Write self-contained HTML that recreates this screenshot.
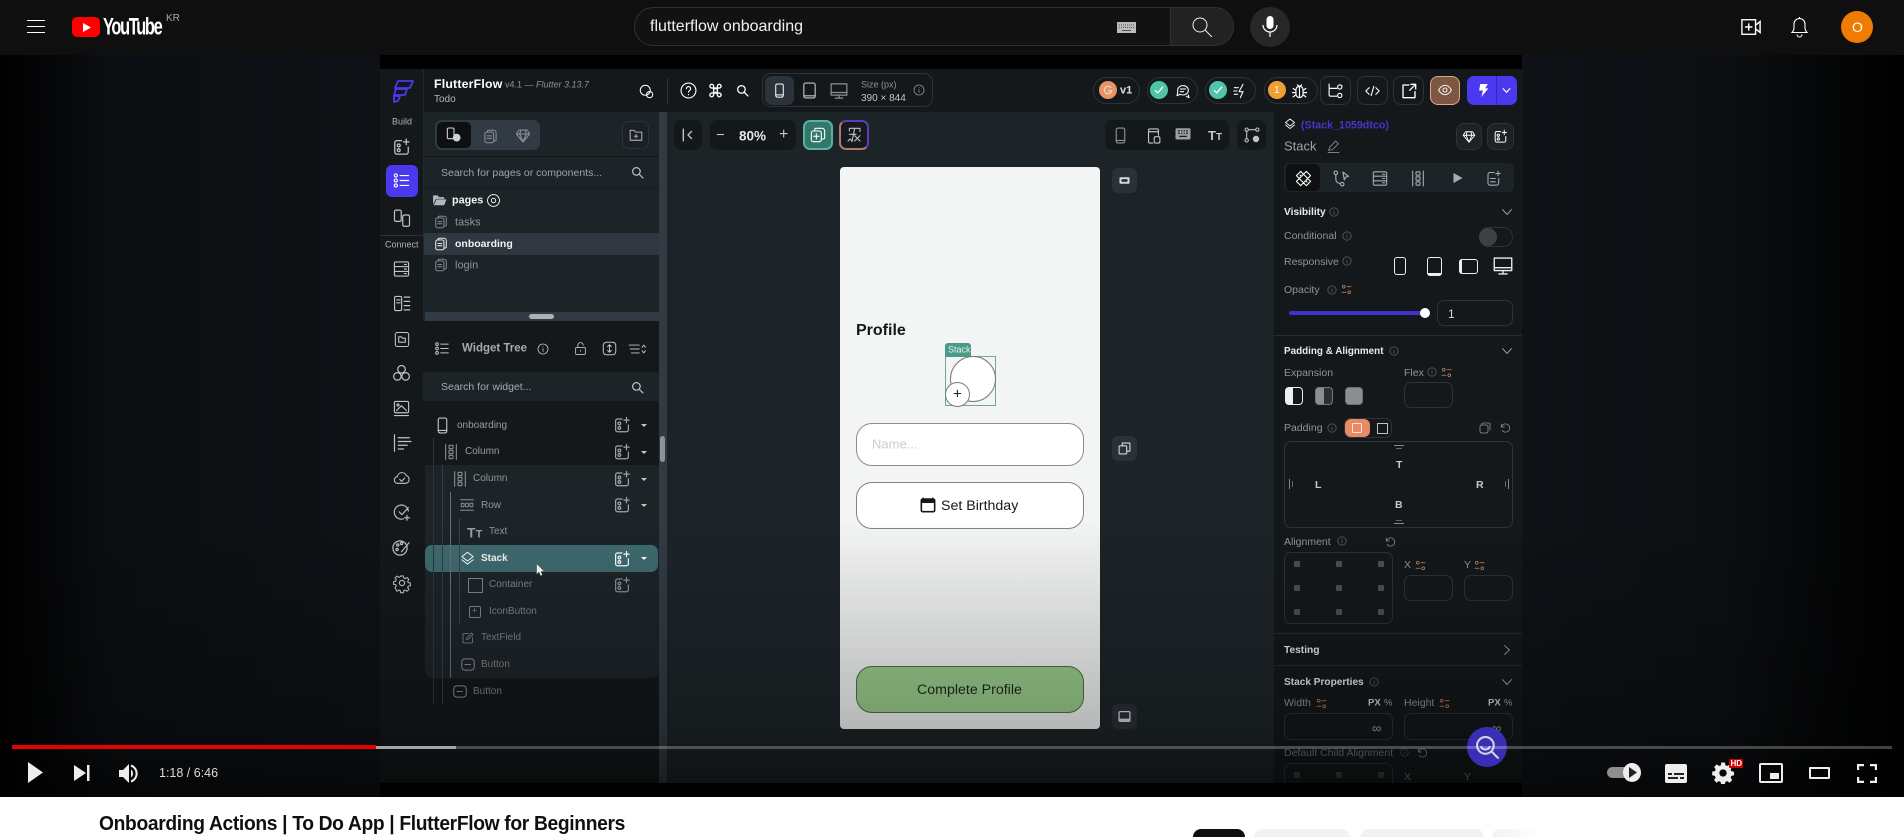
<!DOCTYPE html>
<html><head><meta charset="utf-8"><title>Onboarding Actions | To Do App | FlutterFlow for Beginners</title>
<style>
html,body{margin:0;padding:0;background:#fff}
#p{position:relative;width:1904px;height:837px;overflow:hidden;font-family:"Liberation Sans",sans-serif;background:#fff}
.a{position:absolute}
.t{position:absolute;white-space:nowrap;line-height:1;transform:translateY(calc(-50% + 2px));color:#9ea3a8;font-size:11px}
.b{font-weight:bold;color:#e8eaeb}
.i{position:absolute;fill:none;stroke:#bfc3c7;stroke-width:1.6;stroke-linecap:round;stroke-linejoin:round;overflow:visible}
.w{stroke:#fff}.g{stroke:#8c9196}.o{stroke:#c98a5e}.f{fill:#fff;stroke:none}
.box{position:absolute;box-sizing:border-box;border:1px solid #2c3238;border-radius:7px}
.l{position:absolute;width:1px;background:#3a4147}
.hr{position:absolute;left:1274px;width:248px;height:1px;background:#272c31}
.btn{position:absolute;box-sizing:border-box;border:1px solid #2c3238;border-radius:8px;background:#14181b}
.dot{position:absolute;width:6px;height:6px;background:#4a4f54;border-radius:1px}
</style></head><body><div id="p">
<svg width="0" height="0" style="position:absolute"><defs>
<symbol id="add" viewBox="0 0 24 24"><path d="M12 4H6a2.500 2.500 0 0 0-2.500 2.500v12A2.500 2.500 0 0 0 6 21h12a2.500 2.500 0 0 0 2.500-2.500V12M18 2v7M14.500 5.500h7"/><circle cx="8.500" cy="10" r="1.800"/><circle cx="8.500" cy="16" r="1.800"/></symbol>
<symbol id="page" viewBox="0 0 24 24"><rect x="3" y="5" width="14" height="17" rx="3"/><path d="M7 5V4a2 2 0 0 1 2-2h8a4 4 0 0 1 4 4v11a2 2 0 0 1-2 2h-2M6.500 11h7M6.500 15h7"/></symbol>
<symbol id="info" viewBox="0 0 24 24"><circle cx="12" cy="12" r="10"/><path d="M12 11v6M12 7v.5"/></symbol>
<symbol id="var" viewBox="0 0 24 24"><circle cx="6" cy="6" r="3"/><path d="M13 6h9M2 18h9"/><circle cx="18" cy="18" r="3"/></symbol>
<symbol id="mag" viewBox="0 0 24 24"><circle cx="10" cy="10" r="7"/><path d="M15 15l7 7"/></symbol>
<symbol id="phone" viewBox="0 0 24 24"><rect x="6" y="1.500" width="12" height="21" rx="2.500"/><path d="M6 19h12"/></symbol>
<symbol id="tab" viewBox="0 0 24 24"><rect x="4" y="1.500" width="16" height="21" rx="2.500"/><path d="M4 19.500h16"/></symbol>
<symbol id="desk" viewBox="0 0 24 24"><rect x="1.500" y="2.500" width="21" height="15"/><path d="M1.500 14h21M12 17.500v3.500M7 21.500h10"/></symbol>
<symbol id="col" viewBox="0 0 24 24"><path d="M4 1v22M20 1v22"/><rect x="9" y="2" width="6" height="5" rx="1"/><rect x="9" y="9.500" width="6" height="5" rx="1"/><rect x="9" y="17" width="6" height="5" rx="1"/></symbol>
<symbol id="stack" viewBox="0 0 24 24"><path d="M12 2l9 7-9 7-9-7zM3 14l9 7 9-7"/></symbol>
<symbol id="chev" viewBox="0 0 24 24"><path d="M3 7l9 10 9-10"/></symbol>
<symbol id="undo" viewBox="0 0 24 24"><path d="M5 4v7h7M5.500 11A9 9 0 1 1 7 18.500"/></symbol>
<symbol id="list" viewBox="0 0 24 24"><circle cx="4" cy="5" r="2.200"/><circle cx="4" cy="12" r="2.200"/><circle cx="4" cy="19" r="2.200"/><path d="M10 5h12M10 12h12M10 19h12"/></symbol>
<symbol id="btnw" viewBox="0 0 24 24"><rect x="2" y="3" width="20" height="18" rx="5"/><path d="M7 12h10" stroke-dasharray="2 1.400"/></symbol>
</defs></svg>

<!-- video background -->
<div class="a" style="left:0;top:55px;width:1904px;height:742px;background:linear-gradient(90deg,#000 0,#0b0e11 110px,#0e1216 380px,#0e1216 1522px,#0c0f12 1720px,#000 1904px)"></div>
<div class="a" style="left:380px;top:55px;width:1142px;height:728px;background:#000"></div>

<!-- APP -->
<div class="a" style="left:380px;top:69px;width:1142px;height:714px;background:#1d2428"></div>
<div class="a" style="left:380px;top:69px;width:1142px;height:43px;background:#14181b"></div>
<div class="a" style="left:380px;top:69px;width:43px;height:714px;background:#14181b"></div>
<div class="a" style="left:423px;top:69px;width:1px;height:714px;background:#22282d"></div>
<div class="a" style="left:1274px;top:112px;width:248px;height:671px;background:#14181b"></div>
<div class="a" style="left:659px;top:112px;width:8px;height:671px;background:#323b44"></div>

<!-- header -->
<svg class="i" style="left:392px;top:79px;width:22px;height:24px;stroke:#4b39ef;stroke-width:1.8" viewBox="0 0 22 24"><path d="M6 2h15l-3 7H3zM4 10h11l-2 6H2zM2 17h6l-2 5-4 1z"/></svg>
<div class="t b" style="left:434px;top:82px;font-size:12.300px;color:#fff;letter-spacing:.2px">FlutterFlow</div>
<div class="t" style="left:505px;top:83px;font-size:9px;color:#8e9398">v4.1 — <i>Flutter 3.13.7</i></div>
<div class="t" style="left:434px;top:98px;font-size:10px;color:#b3b7bb">Todo</div>
<svg class="i w" style="left:639px;top:84px;width:15px;height:15px" viewBox="0 0 24 24"><circle cx="10" cy="10" r="8"/><circle cx="17" cy="17" r="5"/></svg>
<div class="a" style="left:667px;top:78px;width:1px;height:26px;background:#2c3238"></div>
<svg class="i w" style="left:680px;top:82px;width:17px;height:17px" viewBox="0 0 24 24"><circle cx="12" cy="12" r="10.500"/><path d="M9 9.500a3 3 0 1 1 4.500 2.600c-1 .6-1.500 1.200-1.500 2.400M12 17.500v.5"/></svg>
<svg class="i w" style="left:708px;top:83px;width:15px;height:15px;stroke-width:2.200" viewBox="0 0 24 24"><path d="M9 9h6v6H9zM9 9V5a3 3 0 1 0-3 3h12a3 3 0 1 0-3-3v14a3 3 0 1 0 3-3H6a3 3 0 1 0 3 3V9"/></svg>
<svg class="i w" style="left:736px;top:84px;width:13px;height:13px;stroke-width:2.400" viewBox="0 0 24 24"><use href="#mag"/></svg>
<div class="box" style="left:762px;top:73px;width:171px;height:34px;border-radius:9px"></div>
<div class="a" style="left:765px;top:76px;width:29px;height:29px;background:#2c333a;border-radius:7px"></div>
<svg class="i w" style="left:772px;top:82px;width:15px;height:17px" viewBox="0 0 24 24"><use href="#phone"/></svg>
<svg class="i" style="left:801px;top:82px;width:17px;height:17px" viewBox="0 0 24 24"><use href="#tab"/></svg>
<svg class="i g" style="left:830px;top:82px;width:18px;height:18px" viewBox="0 0 24 24"><use href="#desk"/></svg>
<div class="t" style="left:861px;top:83px;font-size:9px;color:#8e9398">Size (px)</div>
<div class="t" style="left:861px;top:97px;font-size:10px;color:#c4c7ca">390 × 844</div>
<svg class="i g" style="left:913px;top:84px;width:12px;height:12px" viewBox="0 0 24 24"><use href="#info"/></svg>

<div class="box" style="left:1093px;top:77px;width:47px;height:27px;border-radius:14px"></div>
<div class="a" style="left:1099px;top:81px;width:18px;height:18px;border-radius:50%;background:#e59466"></div>
<svg class="i" style="left:1103px;top:85px;width:10px;height:10px;stroke:#f5d5bf;stroke-width:3" viewBox="0 0 24 24"><path d="M19 6a9 9 0 1 0 2 8h-8"/></svg>
<div class="t" style="left:1120px;top:89px;font-size:11px;font-weight:bold;color:#dfe1e3">v1</div>
<div class="box" style="left:1147px;top:77px;width:51px;height:27px;border-radius:14px"></div>
<div class="a" style="left:1150px;top:81px;width:18px;height:18px;border-radius:50%;background:#4fc4a8"></div>
<svg class="i w" style="left:1154px;top:85px;width:10px;height:10px;stroke-width:3" viewBox="0 0 24 24"><path d="M3 13l6 6L21 5"/></svg>
<svg class="i w" style="left:1175px;top:83px;width:16px;height:16px" viewBox="0 0 24 24"><path d="M4 11a8 7 0 1 1 4 6l-5 2 1-4zM17 20l4 2-1-4M8 9h8M8 13h5"/></svg>
<div class="box" style="left:1205px;top:77px;width:51px;height:27px;border-radius:14px"></div>
<div class="a" style="left:1209px;top:81px;width:18px;height:18px;border-radius:50%;background:#4fc4a8"></div>
<svg class="i w" style="left:1213px;top:85px;width:10px;height:10px;stroke-width:3" viewBox="0 0 24 24"><path d="M3 13l6 6L21 5"/></svg>
<svg class="i w" style="left:1233px;top:83px;width:16px;height:16px" viewBox="0 0 24 24"><path d="M15 2L9 13h6l-4 9M2 7h6M1 12h5M2 17h5"/></svg>
<div class="box" style="left:1264px;top:77px;width:54px;height:27px;border-radius:14px"></div>
<div class="a" style="left:1268px;top:81px;width:18px;height:18px;border-radius:50%;background:#f0a033"></div>
<div class="t" style="left:1274px;top:89px;font-size:10px;color:#fff">1</div>
<svg class="i w" style="left:1291px;top:82px;width:17px;height:17px" viewBox="0 0 24 24"><rect x="7" y="6" width="10" height="16" rx="5"/><path d="M12 6v16M3 9l4 3M21 9l-4 3M2 15h5M22 15h-5M3 21l4-3M21 21l-4-3M9 4l2 2M15 4l-2 2"/></svg>
<div class="btn" style="left:1320px;top:76px;width:31px;height:29px"></div>
<svg class="i w" style="left:1327px;top:82px;width:17px;height:17px" viewBox="0 0 24 24"><path d="M3 3v15a2 2 0 0 0 2 2h9M3 9h11M21 5h-1"/><circle cx="18" cy="7" r="3"/><circle cx="18" cy="19" r="3"/></svg>
<div class="btn" style="left:1357px;top:76px;width:31px;height:29px"></div>
<svg class="i w" style="left:1364px;top:83px;width:17px;height:16px" viewBox="0 0 24 24"><path d="M7 7l-5 5 5 5M17 7l5 5-5 5M14 5l-4 14"/></svg>
<div class="btn" style="left:1393px;top:76px;width:31px;height:29px"></div>
<svg class="i w" style="left:1401px;top:83px;width:16px;height:16px;stroke-width:2" viewBox="0 0 24 24"><path d="M12 3H3v19h18v-9M13 11l9-9M15 2h7v7"/></svg>
<div class="a" style="left:1430px;top:76px;width:30px;height:29px;background:#7e5743;border:1px solid #d9a88c;border-radius:8px;box-sizing:border-box"></div>
<svg class="i w" style="left:1437px;top:83px;width:16px;height:14px" viewBox="0 0 24 24"><path d="M1 12s4-8 11-8 11 8 11 8-4 8-11 8-11-8-11-8z"/><circle cx="12" cy="12" r="3.500"/></svg>
<div class="a" style="left:1467px;top:76px;width:50px;height:29px;background:#4b39ef;border-radius:7px"></div>
<div class="a" style="left:1496px;top:76px;width:1px;height:29px;background:#3326b8"></div>
<svg class="i f" style="left:1477px;top:83px;width:13px;height:15px" viewBox="0 0 24 24"><path d="M6 0h14l-5 8h6L8 24l3-12H4z"/></svg>
<svg class="i w" style="left:1502px;top:86px;width:9px;height:9px;stroke-width:3" viewBox="0 0 24 24"><use href="#chev"/></svg>

<!-- rail -->
<div class="t" style="left:392px;top:120px;font-size:9px;color:#b0b4b8;width:20px">Build</div>
<svg class="i" style="left:392px;top:137px;width:19px;height:20px" viewBox="0 0 24 24"><use href="#add"/></svg>
<div class="a" style="left:386px;top:165px;width:32px;height:32px;background:#4b39ef;border-radius:6px"></div>
<svg class="i w" style="left:393px;top:172px;width:17px;height:17px" viewBox="0 0 24 24"><use href="#list"/></svg>
<svg class="i" style="left:393px;top:209px;width:18px;height:18px" viewBox="0 0 24 24"><rect x="2" y="1.500" width="9" height="15" rx="2"/><rect x="13" y="8" width="9" height="15" rx="2"/></svg>
<div class="a" style="left:381px;top:235px;width:42px;height:1px;background:#2c3238"></div>
<div class="t" style="left:385px;top:243px;font-size:9px;color:#b0b4b8">Connect</div>
<svg class="i" style="left:393px;top:260px;width:17px;height:18px" viewBox="0 0 24 24"><rect x="2" y="2" width="20" height="20" rx="2"/><path d="M2 8.500h20M2 15.500h20M16 5.500h3M16 12h3M16 18.500h3"/></svg>
<svg class="i" style="left:393px;top:295px;width:18px;height:17px" viewBox="0 0 24 24"><rect x="1.500" y="2" width="10" height="20" rx="2"/><path d="M15 3h8M15 9h8M15 15h8M15 21h8M4.500 7h5M4.500 11h5"/></svg>
<svg class="i" style="left:394px;top:331px;width:16px;height:17px" viewBox="0 0 24 24"><rect x="2" y="1.500" width="20" height="21" rx="3"/><path d="M7 8h4l1.500 2H17v6H7z"/></svg>
<svg class="i" style="left:392px;top:364px;width:19px;height:18px" viewBox="0 0 24 24"><circle cx="12" cy="7" r="5"/><circle cx="6.500" cy="16.500" r="5"/><circle cx="17.500" cy="16.500" r="5"/></svg>
<svg class="i" style="left:392px;top:400px;width:19px;height:17px" viewBox="0 0 24 24"><rect x="2" y="2" width="20" height="16" rx="2"/><circle cx="7" cy="7" r="1.500"/><path d="M5 15l7-7 7 7M2 22h20"/></svg>
<svg class="i" style="left:393px;top:434px;width:18px;height:18px" viewBox="0 0 24 24"><path d="M2 1v22M7 5h15M7 10h17M7 15h12M7 20h7"/></svg>
<svg class="i" style="left:392px;top:470px;width:20px;height:16px" viewBox="0 0 24 24"><path d="M6 20a5 5 0 0 1-1-10 7 7 0 0 1 13.500-1.500A6 6 0 0 1 18 20zM8.500 14l3 3 4.500-5"/></svg>
<svg class="i" style="left:393px;top:504px;width:18px;height:17px" viewBox="0 0 24 24"><path d="M21 10a10 10 0 1 0-7 11M8 11l4 4 9-10M19 16v7M15.500 19.500h7"/></svg>
<svg class="i" style="left:392px;top:539px;width:19px;height:18px" viewBox="0 0 24 24"><circle cx="10" cy="12" r="9.500"/><circle cx="7" cy="8" r="1.500"/><circle cx="12" cy="6" r="1.500"/><circle cx="6" cy="14" r="1.500"/><path d="M12 17l10-12"/></svg>
<svg class="i" style="left:393px;top:574px;width:18px;height:18px" viewBox="0 0 24 24"><circle cx="12" cy="12" r="3.500"/><path d="M10 1.500h4l.6 3.200 2 .9 2.800-1.800 2.800 2.800-1.800 2.800.9 2 3.100.6v4l-3.100.6-.9 2 1.800 2.800-2.800 2.800-2.800-1.800-2 .9-.6 3.100h-4l-.6-3.100-2-.9-2.800 1.800L1.700 19l1.800-2.800-.9-2L-.5 14v-4l3.100-.6.9-2L1.700 4.600 4.500 1.800l2.800 1.800 2-.9z" transform="translate(1.200 1.200) scale(.9)"/></svg>

<!-- left panel -->
<div class="a" style="left:435px;top:120px;width:105px;height:30px;background:#323b44;border-radius:7px"></div>
<div class="a" style="left:437px;top:122px;width:34px;height:26px;background:#0d0f11;border-radius:5px"></div>
<svg class="i w" style="left:446px;top:127px;width:16px;height:16px;stroke:#d0d3d6" viewBox="0 0 24 24"><rect x="2" y="1.500" width="10" height="16" rx="2"/><circle cx="16" cy="16" r="5" fill="#d0d3d6"/></svg>
<svg class="i g" style="left:483px;top:129px;width:15px;height:15px" viewBox="0 0 24 24"><use href="#page"/></svg>
<svg class="i g" style="left:515px;top:128px;width:16px;height:16px" viewBox="0 0 24 24"><path d="M6 3h12l4 6-10 12L2 9zM2 9h20M9 3L7 9l5 12 5-12-2-6"/></svg>
<div class="box" style="left:622px;top:121px;width:27px;height:28px;background:#1a2024"></div>
<svg class="i" style="left:629px;top:128px;width:14px;height:14px" viewBox="0 0 24 24"><path d="M2 4h7l2 3h11v14H2zM9 14h6M12 11v6"/></svg>
<div class="a" style="left:423px;top:156px;width:236px;height:1px;background:#14181b"></div>
<div class="t" style="left:441px;top:171px;font-size:10.500px;color:#9ea3a8">Search for pages or components...</div>
<svg class="i" style="left:631px;top:166px;width:13px;height:13px;stroke-width:2.200" viewBox="0 0 24 24"><use href="#mag"/></svg>
<div class="a" style="left:423px;top:187px;width:236px;height:1px;background:#171c20"></div>
<svg class="i f" style="left:432px;top:193px;width:15px;height:14px;fill:#b4b8bc" viewBox="0 0 24 24"><path d="M1 4h8l2 3h9v3H6L1 20zM7 11h17l-4 10H2z"/></svg>
<div class="t b" style="left:452px;top:199px;font-size:10.800px;color:#f2f3f4">pages</div>
<svg class="i w" style="left:487px;top:194px;width:13px;height:13px" viewBox="0 0 24 24"><circle cx="12" cy="12" r="11"/><circle cx="12" cy="12" r="4"/></svg>
<svg class="i g" style="left:434px;top:215px;width:14px;height:14px" viewBox="0 0 24 24"><use href="#page"/></svg>
<div class="t" style="left:455px;top:221px;font-size:11px;color:#8f9499">tasks</div>
<div class="a" style="left:424px;top:233px;width:235px;height:22px;background:#2f3840"></div>
<svg class="i w" style="left:434px;top:237px;width:14px;height:14px" viewBox="0 0 24 24"><use href="#page"/></svg>
<div class="t b" style="left:455px;top:242px;font-size:10.500px;color:#f2f3f4">onboarding</div>
<svg class="i g" style="left:434px;top:258px;width:14px;height:14px" viewBox="0 0 24 24"><use href="#page"/></svg>
<div class="t" style="left:455px;top:264px;font-size:11px;color:#8f9499">login</div>

<div class="a" style="left:425px;top:312px;width:234px;height:9px;background:#323b44"></div>
<div class="a" style="left:529px;top:314px;width:25px;height:5px;background:#adb1b5;border-radius:3px"></div>
<div class="a" style="left:423px;top:321px;width:236px;height:462px;background:#14181b"></div>
<svg class="i" style="left:434px;top:341px;width:16px;height:15px" viewBox="0 0 24 24"><use href="#list"/></svg>
<div class="t" style="left:462px;top:347px;font-size:11.500px;font-weight:bold;color:#a7abaf">Widget Tree</div>
<svg class="i" style="left:537px;top:343px;width:12px;height:12px" viewBox="0 0 24 24"><use href="#info"/></svg>
<svg class="i" style="left:574px;top:341px;width:13px;height:15px" viewBox="0 0 24 24"><rect x="3" y="10" width="18" height="13" rx="2"/><path d="M7 10V6a5 5 0 0 1 10 0M12 15v2"/></svg>
<svg class="i" style="left:602px;top:341px;width:15px;height:15px" viewBox="0 0 24 24"><rect x="2" y="2" width="20" height="20" rx="5"/><path d="M12 6v12M9 9l3-3 3 3M9 15l3 3 3-3"/></svg>
<svg class="i" style="left:628px;top:342px;width:18px;height:14px" viewBox="0 0 32 24"><path d="M2 5h18M4 12h16M6 19h14M25 9l3-4 3 4M25 15l3 4 3-4"/></svg>
<div class="a" style="left:423px;top:372px;width:236px;height:29px;background:#1d2428"></div>
<div class="t" style="left:441px;top:385px;font-size:10.500px;color:#a6aaae">Search for widget...</div>
<svg class="i" style="left:631px;top:381px;width:13px;height:13px;stroke-width:2.200" viewBox="0 0 24 24"><use href="#mag"/></svg>
<div class="a" style="left:425px;top:465px;width:234px;height:213px;background:#1d2428;border-radius:0 0 8px 8px"></div>
<div class="a" style="left:425px;top:545px;width:233px;height:27px;background:#3e6a6f;border-radius:7px"></div>

<div class="l" style="left:433px;top:438px;height:266px;background:#2f363b"></div>
<div class="l" style="left:442px;top:465px;height:239px;background:#353c42"></div>
<div class="l" style="left:450px;top:492px;height:186px;background:#6a7074"></div>
<div class="l" style="left:459px;top:518px;height:106px;background:#3a4147"></div>

<svg class="i" style="left:434px;top:417px;width:17px;height:17px" viewBox="0 0 24 24"><use href="#phone"/></svg>
<div class="t" style="left:457px;top:424px;font-size:10px;color:#9a9fa3">onboarding</div>
<svg class="i g" style="left:443px;top:444px;width:16px;height:16px" viewBox="0 0 24 24"><use href="#col"/></svg>
<div class="t" style="left:465px;top:450px;font-size:10px;color:#9a9fa3">Column</div>
<svg class="i g" style="left:452px;top:471px;width:16px;height:16px" viewBox="0 0 24 24"><use href="#col"/></svg>
<div class="t" style="left:473px;top:477px;font-size:10px;color:#8f9499">Column</div>
<svg class="i g" style="left:459px;top:498px;width:16px;height:14px" viewBox="0 0 24 24"><path d="M1 3h22M1 21h22"/><rect x="2" y="9" width="5" height="6" rx="1"/><rect x="9.500" y="9" width="5" height="6" rx="1"/><rect x="17" y="9" width="5" height="6" rx="1"/></svg>
<div class="t" style="left:481px;top:504px;font-size:10px;color:#8f9499">Row</div>
<div class="t" style="left:467px;top:531px;font-size:14px;font-weight:bold;color:#9a9fa3">T<span style="font-size:11px">T</span></div>
<div class="t" style="left:489px;top:530px;font-size:10px;color:#8f9499">Text</div>
<svg class="i w" style="left:460px;top:551px;width:15px;height:15px" viewBox="0 0 24 24"><use href="#stack"/></svg>
<div class="t b" style="left:481px;top:557px;font-size:10px;color:#f4f5f5">Stack</div>
<svg class="a" style="left:536px;top:563px;width:9px;height:14px" viewBox="0 0 18 28"><path d="M1 1v22l5-5 3 8 4-2-3-7h7z" fill="#fff" stroke="#333"/></svg>
<div class="a" style="left:468px;top:578px;width:13px;height:13px;border:1px solid #80868b"></div>
<div class="t" style="left:489px;top:583px;font-size:10px;color:#7f8489">Container</div>
<div class="a" style="left:469px;top:606px;width:10px;height:10px;border:1px solid #80868b;border-radius:2px"></div>
<div class="t" style="left:472px;top:609px;font-size:9px;color:#80868b">+</div>
<div class="t" style="left:489px;top:610px;font-size:10px;color:#7f8489">IconButton</div>
<svg class="i g" style="left:462px;top:632px;width:12px;height:12px" viewBox="0 0 24 24"><path d="M13 3H4a2 2 0 0 0-2 2v15a2 2 0 0 0 2 2h15a2 2 0 0 0 2-2v-9M9 15l1-4 9-9 3 3-9 9z"/></svg>
<svg class="i g" style="left:460px;top:657px;width:16px;height:15px" viewBox="0 0 24 24"><use href="#btnw"/></svg>
<div class="t" style="left:481px;top:636px;font-size:10px;color:#7f8489">TextField</div>
<div class="t" style="left:481px;top:663px;font-size:10px;color:#7f8489">Button</div>
<svg class="i g" style="left:452px;top:684px;width:16px;height:15px" viewBox="0 0 24 24"><use href="#btnw"/></svg>
<div class="t" style="left:473px;top:690px;font-size:10px;color:#7f8489">Button</div>

<svg class="i g" style="left:613px;top:416px;width:18px;height:18px;stroke:#a0a5a9" viewBox="0 0 24 24"><use href="#add"/></svg>
<svg class="i g" style="left:613px;top:443px;width:18px;height:18px;stroke:#a0a5a9" viewBox="0 0 24 24"><use href="#add"/></svg>
<svg class="i g" style="left:613px;top:470px;width:18px;height:18px;stroke:#a0a5a9" viewBox="0 0 24 24"><use href="#add"/></svg>
<svg class="i g" style="left:613px;top:496px;width:18px;height:18px;stroke:#a0a5a9" viewBox="0 0 24 24"><use href="#add"/></svg>
<svg class="i w" style="left:613px;top:550px;width:18px;height:18px" viewBox="0 0 24 24"><use href="#add"/></svg>
<svg class="i g" style="left:613px;top:576px;width:18px;height:18px" viewBox="0 0 24 24"><use href="#add"/></svg>
<div class="a" style="left:641px;top:424px;border:3px solid transparent;border-top:3px solid #c4c7ca;border-left-width:3px;border-bottom:0"></div>
<div class="a" style="left:641px;top:451px;border:3px solid transparent;border-top:3px solid #c4c7ca;border-bottom:0"></div>
<div class="a" style="left:641px;top:478px;border:3px solid transparent;border-top:3px solid #c4c7ca;border-bottom:0"></div>
<div class="a" style="left:641px;top:504px;border:3px solid transparent;border-top:3px solid #c4c7ca;border-bottom:0"></div>
<div class="a" style="left:641px;top:557px;border:3px solid transparent;border-top:3px solid #fff;border-bottom:0"></div>
<div class="a" style="left:660px;top:436px;width:5px;height:26px;background:#8d9297;border-radius:3px"></div>

<!-- canvas toolbar -->
<div class="a" style="left:674px;top:120px;width:28px;height:30px;background:#14181b;border-radius:7px"></div>
<svg class="i" style="left:681px;top:128px;width:14px;height:14px" viewBox="0 0 24 24"><path d="M4 2v20M18 6l-6 6 6 6" stroke-width="2.400"/></svg>
<div class="a" style="left:710px;top:120px;width:86px;height:30px;background:#14181b;border-radius:7px"></div>
<div class="t" style="left:716px;top:133px;font-size:15px;color:#c4c7ca">−</div>
<div class="t" style="left:739px;top:134px;font-size:13.500px;font-weight:bold;color:#e4e6e7">80%</div>
<div class="t" style="left:779px;top:133px;font-size:16px;color:#c4c7ca">+</div>
<div class="a" style="left:803px;top:120px;width:30px;height:30px;box-sizing:border-box;background:#32776c;border:2px solid #5bb0a0;border-radius:7px"></div>
<svg class="i w" style="left:810px;top:127px;width:16px;height:16px" viewBox="0 0 24 24"><rect x="2" y="6" width="15" height="16" rx="3"/><path d="M7 6V4a2 2 0 0 1 2-2h9a4 4 0 0 1 4 4v10a2 2 0 0 1-2 2h-3M9.500 10v8M5.500 14h8"/></svg>
<div class="a" style="left:839px;top:120px;width:30px;height:30px;box-sizing:border-box;background:#16191d;border:2px solid;border-color:#5a3fb0 #5a3fb0 #b07a70 #b07a70;border-radius:7px"></div>
<svg class="i" style="left:846px;top:127px;width:16px;height:16px" viewBox="0 0 24 24"><path d="M5 2h16v5M5 2v4M13 2l-4 20M5 11h10M13 13l8 8M21 13l-8 8M3 21l3-3 3 3"/></svg>
<div class="a" style="left:1105px;top:120px;width:124px;height:30px;background:#14181b;border-radius:7px"></div>
<svg class="i" style="left:1112px;top:126px;width:17px;height:19px;stroke:#8c9196" viewBox="0 0 24 24"><use href="#phone"/></svg>
<svg class="i" style="left:1145px;top:126px;width:17px;height:20px" viewBox="0 0 24 24"><path d="M11 22H7a2 2 0 0 1-2-2V4a2 2 0 0 1 2-2h10a2 2 0 0 1 2 2v7M5 6h14"/><rect x="13" y="13" width="8" height="9" rx="2"/></svg>
<svg class="i f" style="left:1174px;top:127px;width:18px;height:15px;fill:#9aa0a5" viewBox="0 0 24 24"><path d="M2 2h20a2 2 0 0 1 2 2v14a2 2 0 0 1-2 2H2a2 2 0 0 1-2-2V4a2 2 0 0 1 2-2zm2 3v2h3V5zm5 0v2h2V5zm4 0v2h2V5zm4 0v2h3V5zM4 9v2h3V9zm5 0v2h2V9zm4 0v2h2V9zm4 0v2h3V9zM6 14v2h12v-2z" fill-rule="evenodd"/></svg>
<div class="t" style="left:1208px;top:134px;font-size:13px;font-weight:bold;color:#c4c7ca">T<span style="font-size:10px">T</span></div>
<div class="a" style="left:1237px;top:120px;width:29px;height:30px;background:#14181b;border-radius:7px"></div>
<svg class="i" style="left:1244px;top:127px;width:16px;height:16px" viewBox="0 0 24 24"><circle cx="4" cy="4" r="2.500"/><circle cx="20" cy="4" r="2.500"/><circle cx="4" cy="20" r="2.500"/><circle cx="18" cy="18" r="4" fill="#bfc3c7"/><path d="M6.500 4h11M4 6.500v11"/></svg>

<!-- phone -->
<div class="a" style="left:840px;top:167px;width:260px;height:562px;background:#f3f4f4;border-radius:4px"></div>
<div class="t" style="left:856px;top:329px;font-size:16px;font-weight:bold;color:#14181b">Profile</div>
<div class="a" style="left:945px;top:356px;width:51px;height:50px;box-sizing:border-box;background:#f3f4f4;border:1px solid #6fa8a2"></div>
<div class="a" style="left:945px;top:343px;width:26px;height:14px;background:#4a9a87;border-radius:3px 3px 0 0"></div>
<div class="t" style="left:948px;top:348px;font-size:9px;color:#e5f3ef">Stack</div>
<div class="a" style="left:950px;top:356px;width:46px;height:46px;box-sizing:border-box;background:#fff;border:1.500px solid #77797b;border-radius:50%"></div>
<div class="a" style="left:945px;top:382px;width:25px;height:25px;box-sizing:border-box;background:#fff;border:1.500px solid #77797b;border-radius:50%"></div>
<div class="t" style="left:953px;top:392px;font-size:15px;color:#222">+</div>
<div class="a" style="left:856px;top:423px;width:228px;height:43px;box-sizing:border-box;background:#fff;border:1.500px solid #8a8c8e;border-radius:16px"></div>
<div class="t" style="left:872px;top:442px;font-size:13px;color:#c9cbcd">Name...</div>
<div class="a" style="left:856px;top:482px;width:228px;height:47px;box-sizing:border-box;background:#fff;border:1.500px solid #808284;border-radius:16px"></div>
<svg class="a" style="left:920px;top:497px;width:16px;height:16px" viewBox="0 0 24 24"><path d="M5 1v3M19 1v3" stroke="#14181b" stroke-width="2"/><rect x="2" y="3" width="20" height="19" rx="2" fill="none" stroke="#14181b" stroke-width="2.400"/><rect x="2" y="3" width="20" height="6" fill="#14181b"/></svg>
<div class="t" style="left:941px;top:503.500px;font-size:14.200px;color:#14181b">Set Birthday</div>
<div class="a" style="left:856px;top:666px;width:228px;height:47px;box-sizing:border-box;background:#9bcf8d;border:1.500px solid #4d6e4a;border-radius:16px"></div>
<div class="t" style="left:917px;top:687.500px;font-size:14.200px;color:#1b2a1a">Complete Profile</div>
<div class="a" style="left:1112px;top:168px;width:25px;height:25px;background:#2a3138;border-radius:6px"></div>
<svg class="i f" style="left:1118px;top:175px;width:13px;height:11px;fill:#d8dadc" viewBox="0 0 24 24"><path d="M3 5h18a2 2 0 0 1 2 2v10a2 2 0 0 1-2 2H3a2 2 0 0 1-2-2V7a2 2 0 0 1 2-2zm5 4a3 3 0 0 0 0 6h8a3 3 0 0 0 0-6z" fill-rule="evenodd"/></svg>
<div class="a" style="left:1112px;top:436px;width:25px;height:25px;background:#2a3138;border-radius:6px"></div>
<svg class="i" style="left:1118px;top:442px;width:13px;height:13px;stroke:#d8dadc;stroke-width:2" viewBox="0 0 24 24"><rect x="2" y="7" width="14" height="15" rx="2"/><path d="M8 7V2h14v15h-6"/></svg>
<div class="a" style="left:1112px;top:704px;width:25px;height:25px;background:#2a3138;border-radius:6px"></div>
<svg class="i" style="left:1118px;top:710px;width:13px;height:13px;stroke:#d8dadc;stroke-width:2.400" viewBox="0 0 24 24"><rect x="2" y="3" width="20" height="18" rx="2"/><path d="M3 18h18" stroke-width="4"/></svg>

<!-- right panel -->
<svg class="i w" style="left:1284px;top:118px;width:12px;height:12px" viewBox="0 0 24 24"><use href="#stack"/></svg>
<div class="t" style="left:1301px;top:123.500px;font-size:10.700px;font-weight:bold;color:#4336c8">(Stack_1059dtco)</div>
<div class="t" style="left:1284px;top:143.500px;font-size:13px;color:#9ea3a8">Stack</div>
<svg class="i g" style="left:1327px;top:140px;width:13px;height:13px" viewBox="0 0 24 24"><path d="M3 19l2-6L16 2l5 5-11 11zM2 23h20"/></svg>
<div class="btn" style="left:1456px;top:123px;width:26px;height:27px;background:#1d2226"></div>
<svg class="i w" style="left:1462px;top:130px;width:14px;height:14px" viewBox="0 0 24 24"><path d="M6 3h12l4 6-10 12L2 9zM2 9h20M9 3L7 9l5 12 5-12-2-6"/></svg>
<div class="btn" style="left:1487px;top:123px;width:27px;height:27px;background:#1d2226"></div>
<svg class="i w" style="left:1493px;top:129px;width:15px;height:15px" viewBox="0 0 24 24"><use href="#add"/></svg>
<div class="a" style="left:1284px;top:163px;width:230px;height:29px;background:#1d2428;border-radius:6px"></div>
<div class="a" style="left:1286px;top:164px;width:34px;height:27px;background:#0d0f11;border-radius:5px"></div>
<svg class="i w" style="left:1295px;top:170px;width:17px;height:17px;stroke-width:1.500" viewBox="0 0 24 24"><path d="M2 8l6-6 14 14-6 6zM16 2l6 6L8 22l-6-6zM7 7l2 2M15 15l2 2"/></svg>
<svg class="i" style="left:1333px;top:170px;width:17px;height:17px;stroke:#a8acb0" viewBox="0 0 24 24"><circle cx="4" cy="4" r="2.500"/><path d="M4 7v6a6 6 0 0 0 6 6"/><circle cx="13" cy="20" r="2.500"/><path d="M14 3l8 6-4 1-2 4z"/></svg>
<svg class="i" style="left:1372px;top:170px;width:16px;height:17px;stroke:#a8acb0" viewBox="0 0 24 24"><rect x="2" y="2" width="20" height="20" rx="2"/><path d="M2 8.500h20M2 15.500h20M16 5.500h3M16 12h3M16 18.500h3"/></svg>
<svg class="i" style="left:1410px;top:170px;width:16px;height:17px;stroke:#a8acb0" viewBox="0 0 24 24"><use href="#col"/></svg>
<svg class="i f" style="left:1452px;top:171px;width:12px;height:14px;fill:#a8acb0" viewBox="0 0 24 24"><path d="M3 2l18 10L3 22z"/></svg>
<svg class="i" style="left:1486px;top:170px;width:16px;height:17px;stroke:#a8acb0" viewBox="0 0 24 24"><path d="M12 3H6a3 3 0 0 0-3 3v13a3 3 0 0 0 3 3h10a3 3 0 0 0 3-3v-7M18 1v7M14.500 4.500h7M7 12h7M7 17h7"/></svg>

<div class="t b" style="left:1284px;top:210.500px;font-size:10.200px">Visibility</div>
<svg class="i g" style="left:1329px;top:207px;width:10px;height:10px;stroke:#6d7277" viewBox="0 0 24 24"><use href="#info"/></svg>
<svg class="i" style="left:1501px;top:206px;width:12px;height:12px" viewBox="0 0 24 24"><use href="#chev"/></svg>
<div class="t" style="left:1284px;top:233.500px;font-size:10.500px;color:#8f9499">Conditional</div>
<svg class="i" style="left:1342px;top:231px;width:10px;height:10px;stroke:#6d7277" viewBox="0 0 24 24"><use href="#info"/></svg>
<div class="a" style="left:1479px;top:227px;width:34px;height:20px;box-sizing:border-box;border:1px solid #2c3238;border-radius:10px"></div>
<div class="a" style="left:1479px;top:228px;width:18px;height:18px;background:#3a4147;border-radius:50%"></div>
<div class="t" style="left:1284px;top:259.500px;font-size:10.500px;color:#8f9499">Responsive</div>
<svg class="i" style="left:1342px;top:256px;width:10px;height:10px;stroke:#6d7277" viewBox="0 0 24 24"><use href="#info"/></svg>
<div class="a" style="left:1394px;top:257px;width:12px;height:18px;box-sizing:border-box;border:1.500px solid #eee;border-radius:3px"></div>
<div class="a" style="left:1427px;top:257px;width:15px;height:19px;box-sizing:border-box;border:1.500px solid #eee;border-bottom-width:3px;border-radius:3px"></div>
<div class="a" style="left:1459px;top:259px;width:19px;height:15px;box-sizing:border-box;border:1.500px solid #eee;border-left-width:3px;border-radius:3px"></div>
<svg class="i" style="left:1493px;top:256px;width:20px;height:20px;stroke:#eee" viewBox="0 0 24 24"><use href="#desk"/></svg>
<div class="t" style="left:1284px;top:287.500px;font-size:10.500px;color:#8f9499">Opacity</div>
<svg class="i" style="left:1327px;top:285px;width:10px;height:10px;stroke:#6d7277" viewBox="0 0 24 24"><use href="#info"/></svg>
<svg class="i o" style="left:1341px;top:284px;width:11px;height:11px" viewBox="0 0 24 24"><use href="#var"/></svg>
<div class="a" style="left:1289px;top:311px;width:136px;height:4px;background:#4033c9;border-radius:2px"></div>
<div class="a" style="left:1420px;top:308px;width:10px;height:10px;background:#fff;border-radius:50%"></div>
<div class="box" style="left:1437px;top:300px;width:76px;height:26px"></div>
<div class="t" style="left:1448px;top:312px;font-size:12px;color:#d4d6d8">1</div>
<div class="hr" style="top:335px"></div>
<div class="t b" style="left:1284px;top:349.500px;font-size:9.900px">Padding &amp; Alignment</div>
<svg class="i" style="left:1389px;top:346px;width:10px;height:10px;stroke:#6d7277" viewBox="0 0 24 24"><use href="#info"/></svg>
<svg class="i" style="left:1501px;top:345px;width:12px;height:12px" viewBox="0 0 24 24"><use href="#chev"/></svg>
<div class="t" style="left:1284px;top:370.500px;font-size:10.500px;color:#8f9499">Expansion</div>
<div class="t" style="left:1404px;top:370.500px;font-size:10.500px;color:#8f9499">Flex</div>
<svg class="i" style="left:1427px;top:367px;width:10px;height:10px;stroke:#6d7277" viewBox="0 0 24 24"><use href="#info"/></svg>
<svg class="i o" style="left:1441px;top:367px;width:11px;height:11px" viewBox="0 0 24 24"><use href="#var"/></svg>
<div class="box" style="left:1404px;top:382px;width:49px;height:26px"></div>
<div class="a" style="left:1285px;top:387px;width:18px;height:18px;box-sizing:border-box;border:1.500px solid #eee;border-radius:4px;background:linear-gradient(90deg,#eee 45%,#14181b 45%)"></div>
<div class="a" style="left:1315px;top:387px;width:18px;height:18px;box-sizing:border-box;border:1.500px solid #777;border-radius:4px;background:linear-gradient(90deg,#8a8f94 50%,#2a2f33 50%)"></div>
<div class="a" style="left:1345px;top:387px;width:18px;height:18px;box-sizing:border-box;border:1.500px solid #6a6f73;border-radius:4px;background:#8a8f94"></div>
<div class="t" style="left:1284px;top:425.500px;font-size:10.500px;color:#8f9499">Padding</div>
<svg class="i" style="left:1327px;top:423px;width:10px;height:10px;stroke:#6d7277" viewBox="0 0 24 24"><use href="#info"/></svg>
<div class="box" style="left:1344px;top:418px;width:48px;height:20px"></div>
<div class="a" style="left:1345px;top:419px;width:25px;height:18px;background:#e88a63;border-radius:6px"></div>
<svg class="i w" style="left:1351px;top:422px;width:12px;height:12px" viewBox="0 0 24 24"><rect x="3" y="3" width="18" height="18" rx="2"/></svg>
<div class="a" style="left:1377px;top:423px;width:9px;height:9px;border:1px solid #bfc3c7"></div>
<svg class="i g" style="left:1479px;top:422px;width:12px;height:12px" viewBox="0 0 24 24"><rect x="2" y="6" width="16" height="16" rx="3"/><path d="M6 6V4a2 2 0 0 1 2-2h12a2 2 0 0 1 2 2v12"/></svg>
<svg class="i g" style="left:1499px;top:422px;width:11px;height:11px" viewBox="0 0 24 24"><use href="#undo"/></svg>
<div class="box" style="left:1284px;top:441px;width:229px;height:87px"></div>
<div class="a" style="left:1394px;top:445px;width:10px;height:1px;background:#888"></div>
<div class="a" style="left:1396px;top:448px;width:6px;height:1px;background:#666"></div>
<div class="t b" style="left:1396px;top:462.500px;font-size:10.500px;color:#c8cacc">T</div>
<div class="t b" style="left:1315px;top:482.500px;font-size:10.500px;color:#c8cacc">L</div>
<div class="t b" style="left:1476px;top:482.500px;font-size:10.500px;color:#c8cacc">R</div>
<div class="t b" style="left:1395px;top:502.500px;font-size:10.500px;color:#c8cacc">B</div>
<div class="a" style="left:1396px;top:520px;width:6px;height:1px;background:#666"></div>
<div class="a" style="left:1394px;top:523px;width:10px;height:1px;background:#888"></div>
<div class="a" style="left:1289px;top:479px;width:1px;height:10px;background:#888"></div>
<div class="a" style="left:1292px;top:481px;width:1px;height:6px;background:#666"></div>
<div class="a" style="left:1505px;top:481px;width:1px;height:6px;background:#666"></div>
<div class="a" style="left:1508px;top:479px;width:1px;height:10px;background:#888"></div>
<div class="t" style="left:1284px;top:539.500px;font-size:10.500px;color:#8f9499">Alignment</div>
<svg class="i" style="left:1337px;top:536px;width:10px;height:10px;stroke:#6d7277" viewBox="0 0 24 24"><use href="#info"/></svg>
<svg class="i g" style="left:1384px;top:536px;width:11px;height:11px" viewBox="0 0 24 24"><use href="#undo"/></svg>
<div class="box" style="left:1284px;top:552px;width:109px;height:72px"></div>
<div class="dot" style="left:1294px;top:561px"></div><div class="dot" style="left:1336px;top:561px"></div><div class="dot" style="left:1378px;top:561px"></div>
<div class="dot" style="left:1294px;top:585px"></div><div class="dot" style="left:1336px;top:585px"></div><div class="dot" style="left:1378px;top:585px"></div>
<div class="dot" style="left:1294px;top:609px"></div><div class="dot" style="left:1336px;top:609px"></div><div class="dot" style="left:1378px;top:609px"></div>
<div class="t" style="left:1404px;top:562.500px;font-size:10.500px;color:#8f9499">X</div>
<svg class="i o" style="left:1415px;top:560px;width:11px;height:11px" viewBox="0 0 24 24"><use href="#var"/></svg>
<div class="t" style="left:1464px;top:562.500px;font-size:10.500px;color:#8f9499">Y</div>
<svg class="i o" style="left:1474px;top:560px;width:11px;height:11px" viewBox="0 0 24 24"><use href="#var"/></svg>
<div class="box" style="left:1404px;top:575px;width:49px;height:26px"></div>
<div class="box" style="left:1464px;top:575px;width:49px;height:26px"></div>
<div class="hr" style="top:633px"></div>
<div class="t b" style="left:1284px;top:648.500px;font-size:10.200px">Testing</div>
<svg class="i" style="left:1501px;top:644px;width:12px;height:12px" viewBox="0 0 24 24"><path d="M7 3l10 9-10 9"/></svg>
<div class="hr" style="top:665px"></div>
<div class="t b" style="left:1284px;top:680.500px;font-size:10.100px">Stack Properties</div>
<svg class="i" style="left:1369px;top:677px;width:10px;height:10px;stroke:#6d7277" viewBox="0 0 24 24"><use href="#info"/></svg>
<svg class="i" style="left:1501px;top:676px;width:12px;height:12px" viewBox="0 0 24 24"><use href="#chev"/></svg>
<div class="t" style="left:1284px;top:700.500px;font-size:10.500px;color:#8f9499">Width</div>
<svg class="i o" style="left:1316px;top:698px;width:11px;height:11px" viewBox="0 0 24 24"><use href="#var"/></svg>
<div class="t b" style="left:1368px;top:700.500px;font-size:9.500px;color:#d0d2d4">PX</div>
<div class="t" style="left:1384px;top:700.500px;font-size:9.500px">%</div>
<div class="t" style="left:1404px;top:700.500px;font-size:10.500px;color:#8f9499">Height</div>
<svg class="i o" style="left:1439px;top:698px;width:11px;height:11px" viewBox="0 0 24 24"><use href="#var"/></svg>
<div class="t b" style="left:1488px;top:700.500px;font-size:9.500px;color:#d0d2d4">PX</div>
<div class="t" style="left:1504px;top:700.500px;font-size:9.500px">%</div>
<div class="box" style="left:1284px;top:713px;width:109px;height:27px"></div>
<div class="box" style="left:1404px;top:713px;width:109px;height:27px"></div>
<div class="t" style="left:1372px;top:725.500px;font-size:13px;color:#9ea3a8">∞</div>
<div class="t" style="left:1492px;top:725.500px;font-size:13px;color:#9ea3a8">∞</div>
<div class="t" style="left:1284px;top:750.500px;font-size:10.500px;color:#74797e">Default Child Alignment</div>
<svg class="i" style="left:1400px;top:748px;width:9px;height:9px;stroke:#5d6267" viewBox="0 0 24 24"><use href="#info"/></svg>
<svg class="i g" style="left:1416px;top:747px;width:11px;height:11px" viewBox="0 0 24 24"><use href="#undo"/></svg>
<div class="box" style="left:1284px;top:763px;width:109px;height:30px"></div>
<div class="dot" style="left:1294px;top:772px;background:#3a3e42"></div><div class="dot" style="left:1336px;top:772px;background:#3a3e42"></div><div class="dot" style="left:1378px;top:772px;background:#3a3e42"></div>
<div class="t" style="left:1404px;top:774.500px;font-size:10.500px;color:#74797e">X</div>
<div class="t" style="left:1464px;top:774.500px;font-size:10.500px;color:#74797e">Y</div>

<!-- letterbox bottom -->
<div class="a" style="left:380px;top:783px;width:1142px;height:14px;background:#000"></div>
<!-- gradient overlay -->
<div class="a" style="left:0;top:520px;width:1904px;height:277px;background:linear-gradient(180deg,rgba(0,0,0,0) 0,rgba(0,0,0,.25) 209px,rgba(0,0,0,.5) 263px,rgba(0,0,0,.55) 100%)"></div>

<!-- magnifier bubble -->
<div class="a" style="left:1467px;top:727px;width:40px;height:40px;background:#3a2fb4;border-radius:50%"></div>
<svg class="i" style="left:1475px;top:735px;width:25px;height:25px;stroke:#cfd3e6;stroke-width:2" viewBox="0 0 24 24"><circle cx="10" cy="10" r="8"/><path d="M6 11.500a4.500 4.500 0 0 0 8 0M16 16l6 6" /></svg>

<!-- progress -->
<div class="a" style="left:12px;top:746px;width:1880px;height:3px;background:rgba(255,255,255,.25)"></div>
<div class="a" style="left:12px;top:746px;width:444px;height:3px;background:rgba(255,255,255,.5)"></div>
<div class="a" style="left:12px;top:745px;width:364px;height:4px;background:#e60000"></div>

<!-- controls -->
<svg class="a" style="left:27px;top:762px;width:17px;height:21px" viewBox="0 0 17 21"><path d="M1 0l15 10.500L1 21z" fill="#eee"/></svg>
<svg class="a" style="left:73px;top:765px;width:18px;height:16px" viewBox="0 0 18 16"><path d="M1 0l12 8-12 8zM14 0h2.500v16H14z" fill="#eee"/></svg>
<svg class="a" style="left:119px;top:764px;width:20px;height:19px" viewBox="0 0 20 19"><path d="M0 6h4l6-6v19l-6-6H0z" fill="#eee"/><path d="M12 5.500a5 5 0 0 1 0 8z" fill="#eee"/><path d="M12 1.500a8.500 8.500 0 0 1 0 16" fill="none" stroke="#eee" stroke-width="2"/></svg>
<div class="t" style="left:159px;top:771px;font-size:12.500px;color:#ddd">1:18 / 6:46</div>
<div class="a" style="left:1607px;top:767px;width:30px;height:11px;background:#8e8e8e;border-radius:6px"></div>
<div class="a" style="left:1623px;top:763px;width:18px;height:19px;background:#eee;border-radius:50%"></div>
<svg class="a" style="left:1628px;top:767px;width:9px;height:11px" viewBox="0 0 9 11"><path d="M1 0l8 5.500-8 5.500z" fill="#222"/></svg>
<svg class="a" style="left:1665px;top:764px;width:22px;height:19px" viewBox="0 0 22 19"><rect width="22" height="19" rx="2" fill="#eee"/><path d="M3 10h4M9 10h10M3 14h10M15 14h4" stroke="#222" stroke-width="2"/></svg>
<svg class="a" style="left:1712px;top:762px;width:22px;height:22px" viewBox="0 0 24 24"><path fill="#eee" fill-rule="evenodd" d="M10 1h4l.6 3.100 2 .8 2.600-1.700 2.800 2.800-1.700 2.600.8 2 3 .5v4l-3 .6-.8 2 1.700 2.500-2.800 2.900-2.600-1.800-2 .9-.6 3h-4l-.6-3-2-.9-2.600 1.800L2.300 20.100 4 17.600l-.8-2-3-.6v-4l3-.5.8-2-1.700-2.600L5.200 3.100l2.600 1.700 2-.8zM12 8.500a4 4 0 1 0 0 8 4 4 0 0 0 0-8z" transform="translate(0 -.500)"/></svg>
<div class="a" style="left:1729px;top:759px;width:14px;height:9px;background:#c00;border-radius:1px"></div>
<div class="t" style="left:1730.500px;top:761.500px;font-size:8px;font-weight:bold;color:#fff">HD</div>
<div class="a" style="left:1759px;top:763px;width:24px;height:20px;box-sizing:border-box;border:2px solid #eee;border-radius:2px"></div>
<div class="a" style="left:1770px;top:773px;width:9px;height:6px;background:#eee"></div>
<div class="a" style="left:1809px;top:767px;width:21px;height:12px;box-sizing:border-box;border:2px solid #eee;border-radius:1px"></div>
<svg class="a" style="left:1857px;top:764px;width:20px;height:19px" viewBox="0 0 20 19"><path d="M1 6V1h6M13 1h6v5M19 13v5h-6M7 18H1v-5" fill="none" stroke="#eee" stroke-width="2.400"/></svg>

<!-- masthead -->
<div class="a" style="left:0;top:0;width:1904px;height:55px;background:#0f0f0f"></div>
<svg class="a" style="left:27px;top:19px;width:18px;height:15px" viewBox="0 0 18 15"><path d="M0 1.500h18M0 7.500h18M0 13.500h18" stroke="#fff" stroke-width="1.100"/></svg>
<div class="a" style="left:72px;top:17px;width:28px;height:20px;background:#f00;border-radius:5px"></div>
<svg class="a" style="left:83px;top:23px;width:8px;height:9px" viewBox="0 0 8 9"><path d="M0 0l8 4.500L0 9z" fill="#fff"/></svg>
<div class="t" style="left:103px;top:27px;font-size:21px;font-weight:bold;color:#fff;letter-spacing:-1.700px;transform:translateY(-50%) scaleX(.78) scaleY(1.150);transform-origin:left center">YouTube</div>
<div class="t" style="left:166px;top:17px;font-size:10px;color:#aaa">KR</div>
<div class="a" style="left:634px;top:7px;width:600px;height:39px;box-sizing:border-box;border:1px solid #303030;border-radius:20px;background:#121212"></div>
<div class="a" style="left:1170px;top:7px;width:64px;height:39px;box-sizing:border-box;border:1px solid #303030;border-radius:0 20px 20px 0;background:#222"></div>
<div class="t" style="left:650px;top:24.500px;font-size:16px;color:#f1f1f1">flutterflow onboarding</div>
<svg class="a" style="left:1117px;top:22px;width:19px;height:11px" viewBox="0 0 19 11"><rect width="19" height="11" fill="#bbb"/><path d="M2 3h15M2 5.500h15" stroke="#555" stroke-dasharray="1 1"/><path d="M5 8.500h9" stroke="#555"/></svg>
<svg class="a" style="left:1192px;top:17px;width:21px;height:20px" viewBox="0 0 21 20"><circle cx="8" cy="8" r="7" fill="none" stroke="#eee" stroke-width="1"/><path d="M13 13l7 7" stroke="#eee" stroke-width="1"/></svg>
<div class="a" style="left:1250px;top:7px;width:40px;height:40px;background:#272727;border-radius:50%"></div>
<svg class="a" style="left:1261px;top:16px;width:18px;height:21px" viewBox="0 0 18 21"><rect x="5.500" y="0" width="7" height="13" rx="3.500" fill="#fff"/><path d="M2 9a7 7 0 0 0 14 0M9 16v5" fill="none" stroke="#fff" stroke-width="1.200"/></svg>
<svg class="a" style="left:1741px;top:17px;width:20px;height:20px" viewBox="0 0 22 20"><rect x="1" y="2" width="15" height="16" fill="none" stroke="#fff" stroke-width="1.500"/><path d="M16 8l5-4v12l-5-4M8.500 6v8M4.500 10h8" fill="none" stroke="#fff" stroke-width="1.600"/></svg>
<svg class="a" style="left:1790px;top:16px;width:19px;height:22px" viewBox="0 0 19 22"><path d="M2 16.500c1.500-1.500 2-2.500 2-5V8a5.500 5.500 0 0 1 11 0v3.500c0 2.500.5 3.500 2 5zM7 18.500a2.500 2.500 0 0 0 5 0M9.500 1V2.500" fill="none" stroke="#fff" stroke-width="1.100"/></svg>
<div class="a" style="left:1841px;top:11px;width:32px;height:32px;background:#ef7c00;border-radius:50%"></div>
<div class="t" style="left:1852px;top:25px;font-size:14px;color:#fff">O</div>

<!-- below video -->
<div class="a" style="left:0;top:797px;width:1904px;height:40px;background:#fff"></div>
<div class="t" style="left:99px;top:824px;font-size:20px;font-weight:bold;color:#0f0f0f;letter-spacing:-.35px;transform:translateY(-50%) scaleX(.962);transform-origin:left center">Onboarding Actions | To Do App | FlutterFlow for Beginners</div>
<div class="a" style="left:1193px;top:829px;width:52px;height:20px;background:#0f0f0f;border-radius:8px"></div>
<div class="a" style="left:1254px;top:829px;width:96px;height:20px;background:#f2f2f2;border-radius:8px"></div>
<div class="a" style="left:1360px;top:829px;width:124px;height:20px;background:#f2f2f2;border-radius:8px"></div>
<div class="a" style="left:1492px;top:829px;width:50px;height:20px;background:linear-gradient(90deg,#f2f2f2,#fff);border-radius:8px 0 0 8px"></div>
</div></body></html>
